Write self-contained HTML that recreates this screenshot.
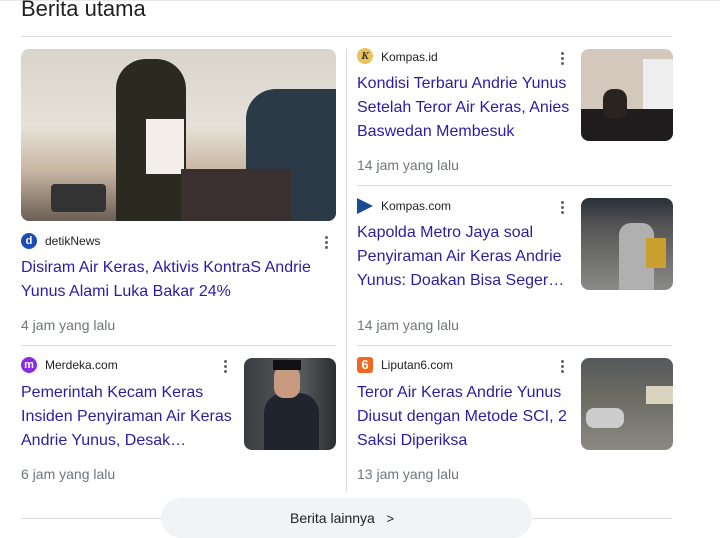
<!DOCTYPE html>
<html><head><meta charset="utf-8"><style>
body{margin:0;width:720px;height:523px;overflow:hidden;background:#fff;font-family:"Liberation Sans",Arial,sans-serif;position:relative}
.a{position:absolute}
.h{left:21px;top:-4px;font-size:22px;color:#202124}
.line{background:#dadce0;height:1px}
.src{font-size:12px;color:#202124;white-space:nowrap}
.t{font-size:16px;line-height:24px;color:#1a0dab;color:#2b1da3}
.time{font-size:14px;color:#70757a}
.dots{width:3px}
.dots i{display:block;width:3px;height:3px;border-radius:50%;background:#5f6368;margin-bottom:2px}
.img{border-radius:8px;overflow:hidden}
.logo{width:16px;height:16px;border-radius:50%;font-size:11px;font-weight:bold;color:#fff;text-align:center;line-height:16px}
</style></head><body>
<div class="a line" style="left:0;top:0;width:720px;background:#e8e8e8"></div>
<div class="a h">Berita utama</div>
<div class="a line" style="left:21px;top:36px;width:651px"></div>
<div class="a line" style="left:346px;top:49px;width:1px;height:443px"></div>

<!-- left big -->
<div class="a img" style="left:21px;top:49px;width:315px;height:172px;background:linear-gradient(180deg,#d9d5cc 0%,#e6e1d8 45%,#c9b8a4 70%,#6b5e55 100%)">
 <div class="a" style="left:95px;top:10px;width:70px;height:162px;background:#2a2a20;border-radius:30px 30px 0 0"></div>
 <div class="a" style="left:125px;top:70px;width:38px;height:55px;background:#f3efe8"></div>
 <div class="a" style="left:225px;top:40px;width:90px;height:132px;background:#2c3a48;border-radius:30px 0 0 0"></div>
 <div class="a" style="left:160px;top:120px;width:110px;height:52px;background:#3a3030"></div>
 <div class="a" style="left:30px;top:135px;width:55px;height:28px;background:#333;border-radius:4px"></div>
</div>
<div class="a logo" style="left:21px;top:233px;background:#1b4db5">d</div>
<div class="a src" style="left:45px;top:234px">detikNews</div>
<div class="a dots" style="left:325px;top:236px"><i></i><i></i><i></i></div>
<div class="a t" style="left:21px;top:256px;width:310px">Disiram Air Keras, Aktivis KontraS Andrie Yunus Alami Luka Bakar 24%</div>
<div class="a time" style="left:21px;top:317px">4 jam yang lalu</div>
<div class="a line" style="left:21px;top:345px;width:315px"></div>

<!-- left small -->
<div class="a logo" style="left:21px;top:357px;background:#8a2be2">m</div>
<div class="a src" style="left:45px;top:358px">Merdeka.com</div>
<div class="a dots" style="left:224px;top:360px"><i></i><i></i><i></i></div>
<div class="a t" style="left:21px;top:381px;width:215px">Pemerintah Kecam Keras Insiden Penyiraman Air Keras Andrie Yunus, Desak…</div>
<div class="a time" style="left:21px;top:466px">6 jam yang lalu</div>
<div class="a img" style="left:244px;top:358px;width:92px;height:92px;background:linear-gradient(90deg,#3a3c40,#5a5c60 60%,#2a2c30)">
 <div class="a" style="left:20px;top:35px;width:55px;height:57px;background:#20242e;border-radius:20px 20px 0 0"></div>
 <div class="a" style="left:30px;top:8px;width:26px;height:32px;background:#c89a80;border-radius:10px"></div>
 <div class="a" style="left:29px;top:2px;width:28px;height:10px;background:#111"></div>
</div>

<!-- right 1 -->
<div class="a logo" style="left:357px;top:48px;background:#e8c35a;color:#333;font-family:'Liberation Serif';font-style:italic">K</div>
<div class="a src" style="left:381px;top:50px">Kompas.id</div>
<div class="a dots" style="left:561px;top:52px"><i></i><i></i><i></i></div>
<div class="a t" style="left:357px;top:72px;width:220px">Kondisi Terbaru Andrie Yunus Setelah Teror Air Keras, Anies Baswedan Membesuk</div>
<div class="a time" style="left:357px;top:157px">14 jam yang lalu</div>
<div class="a img" style="left:581px;top:49px;width:92px;height:92px;background:#d4c8bc">
 <div class="a" style="left:0;top:60px;width:92px;height:32px;background:#1e1c1c"></div>
 <div class="a" style="left:22px;top:40px;width:24px;height:30px;background:#2a2420;border-radius:10px"></div>
 <div class="a" style="left:62px;top:10px;width:30px;height:50px;background:#eee"></div>
</div>
<div class="a line" style="left:357px;top:185px;width:315px"></div>

<!-- right 2 -->
<div class="a" style="left:357px;top:198px;width:0;height:0;border-left:16px solid #1a4d8f;border-top:8px solid transparent;border-bottom:8px solid transparent"></div>
<div class="a src" style="left:381px;top:199px">Kompas.com</div>
<div class="a dots" style="left:561px;top:201px"><i></i><i></i><i></i></div>
<div class="a t" style="left:357px;top:221px;width:220px">Kapolda Metro Jaya soal Penyiraman Air Keras Andrie Yunus: Doakan Bisa Seger…</div>
<div class="a time" style="left:357px;top:317px">14 jam yang lalu</div>
<div class="a img" style="left:581px;top:198px;width:92px;height:92px;background:linear-gradient(180deg,#2a3038 0%,#555 30%,#8a8a88 100%)">
 <div class="a" style="left:38px;top:25px;width:35px;height:67px;background:#b0b0b0;border-radius:12px 12px 0 0"></div>
 <div class="a" style="left:65px;top:40px;width:20px;height:30px;background:#c9a030"></div>
</div>
<div class="a line" style="left:357px;top:345px;width:315px"></div>

<!-- right 3 -->
<div class="a" style="left:357px;top:357px;width:16px;height:16px;border-radius:3px;background:#f26522;color:#fff;font-weight:bold;font-size:13px;text-align:center;line-height:16px">6</div>
<div class="a src" style="left:381px;top:358px">Liputan6.com</div>
<div class="a dots" style="left:561px;top:360px"><i></i><i></i><i></i></div>
<div class="a t" style="left:357px;top:381px;width:220px">Teror Air Keras Andrie Yunus Diusut dengan Metode SCI, 2 Saksi Diperiksa</div>
<div class="a time" style="left:357px;top:466px">13 jam yang lalu</div>
<div class="a img" style="left:581px;top:358px;width:92px;height:92px;background:linear-gradient(180deg,#55585a 0%,#6a6a62 40%,#8a8a82 100%)">
 <div class="a" style="left:65px;top:28px;width:27px;height:18px;background:#d8d4c0"></div>
 <div class="a" style="left:5px;top:50px;width:38px;height:20px;background:#ccc;border-radius:8px"></div>
</div>

<!-- bottom -->
<div class="a line" style="left:21px;top:518px;width:651px"></div>
<div class="a" style="left:161px;top:498px;width:371px;height:40px;border-radius:20px;background:#f1f3f4"></div>
<div class="a" style="left:290px;top:510px;font-size:14px;color:#202124">Berita lainnya&nbsp;&nbsp;&nbsp;<span style="font-size:13px">&gt;</span></div>
</body></html>
